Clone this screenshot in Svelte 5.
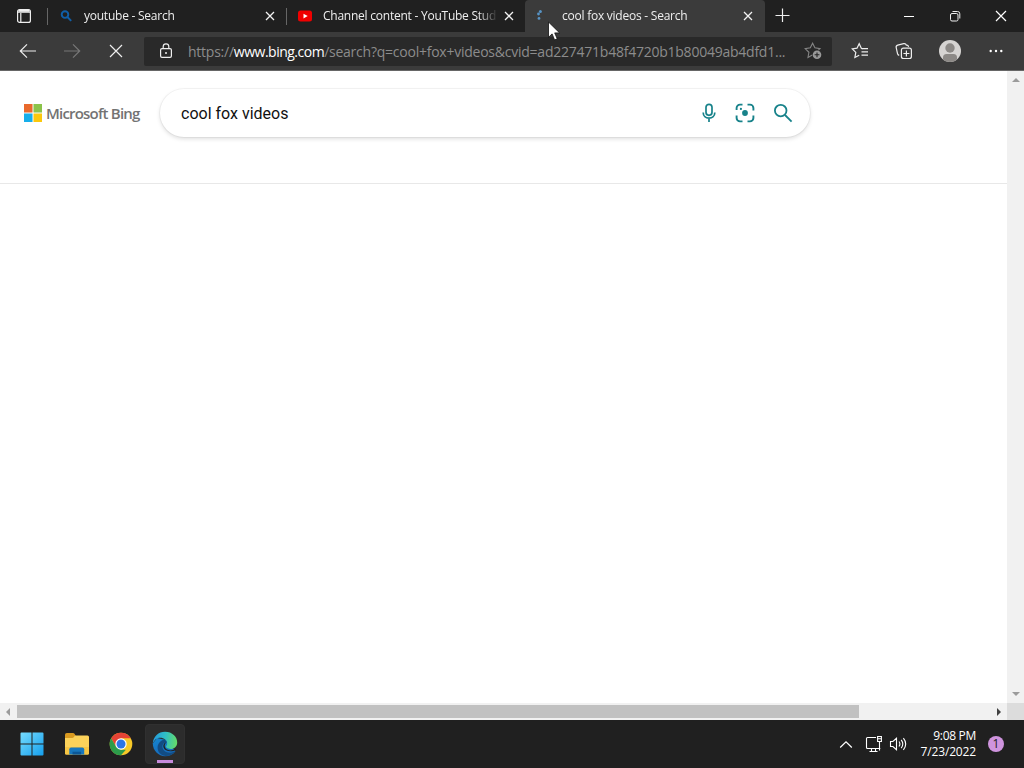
<script>
    const tabs = [
        { title: 'youtube - Search', icon: 'search', active: false },
        { title: 'Channel content - YouTube Stud', icon: 'youtube', active: false },
        { title: 'cool fox videos - Search', icon: 'loading', active: true }
    ];

    let query = 'cool fox videos';
</script>

<div class="desktop">
    <div class="tab-strip">
        <div class="tab-actions">
            <svg width="16" height="16" viewBox="0 0 16 16" fill="none" stroke="#eee" stroke-width="1.2">
                <rect x="1.6" y="1.6" width="12.8" height="12.8" rx="2" />
                <path d="M1.6 4.2h12.8M4.8 5v9.4" />
                <path d="M2.5 2.8h11" stroke-width="2" />
            </svg>
        </div>
        {#each tabs as tab}
            <div class="tab" class:active={tab.active}>
                <span class="favicon">
                    {#if tab.icon === 'search'}
                        <svg width="14" height="14" viewBox="0 0 14 14" fill="none" stroke="#105fa8" stroke-width="1.9">
                            <circle cx="6" cy="5.6" r="3.3" />
                            <path d="M8.4 8l3.8 3.9" />
                        </svg>
                    {:else if tab.icon === 'youtube'}
                        <svg width="14" height="14" viewBox="0 0 14 14">
                            <rect y="1.6" width="14" height="11" rx="2.5" fill="#f00000" />
                            <path d="M5.5 4.7v4.8l4.2-2.4z" fill="#fff" />
                        </svg>
                    {:else}
                        <svg width="14" height="14" viewBox="0 0 14 14" fill="#5793c4">
                            <circle cx="3.4" cy="2.4" r="1.5" />
                            <circle cx="1.5" cy="5" r="1.4" />
                            <circle cx="2" cy="9.4" r="1.4" />
                        </svg>
                    {/if}
                </span>
                <span class="title">{tab.title}</span>
                <svg class="close" width="10" height="10" viewBox="0 0 10 10" fill="none" stroke="#f2f2f2" stroke-width="1.3">
                    <path d="M1 1l8 8M9 1l-8 8" />
                </svg>
            </div>
        {/each}
        <svg class="new-tab" width="16" height="16" viewBox="0 0 16 16" stroke="#eee" stroke-width="1.2">
            <path d="M8.5 1.5v13.5M1.5 8.5h14" />
        </svg>
        <div class="window-controls">
            <span><svg width="12" height="12" viewBox="0 0 12 12" stroke="#fff"><path d="M1 6.5h10" /></svg></span>
            <span>
                <svg width="12" height="12" viewBox="0 0 12 12" fill="none" stroke="#eee">
                    <rect x="1.5" y="3.5" width="7.5" height="7.5" rx="1.5" />
                    <path d="M3.5 1.5h5a2.3 2.3 0 0 1 2.3 2.3v4.7" />
                </svg>
            </span>
            <span>
                <svg width="12" height="12" viewBox="0 0 12 12" stroke="#fff" stroke-width="1.2"><path d="M1 1l10 10M11 1L1 11" /></svg>
            </span>
        </div>
    </div>

    <div class="toolbar">
        <div class="nav">
            <span><svg width="18" height="16" viewBox="0 0 18 16" fill="none" stroke="#eee" stroke-width="1.2"><path d="M17 8H1.5M8 1.3L1.3 8 8 14.7" /></svg></span>
            <span><svg width="18" height="16" viewBox="0 0 18 16" fill="none" stroke="#777" stroke-width="1.2"><path d="M1 8h15.5M10 1.3L16.7 8 10 14.7" /></svg></span>
            <span><svg width="14" height="14" viewBox="0 0 14 14" fill="none" stroke="#eee" stroke-width="1.2"><path d="M1 1l12 12M13 1L1 13" /></svg></span>
        </div>
        <div class="address">
            <svg class="lock" width="14" height="16" viewBox="0 0 14 16" fill="none" stroke="#eee" stroke-width="1.2">
                <rect x="1.6" y="5.6" width="10.8" height="8.8" rx="1.4" />
                <path d="M4.2 5.5V3.6a2.8 2.8 0 0 1 5.6 0v1.9" />
                <circle cx="7" cy="10" r="1" fill="#eee" stroke="none" />
            </svg>
            <span class="url">https://<b>www.bing.com</b>/search?q=cool+fox+videos&amp;cvid=ad227471b48f4720b1b80049ab4dfd1...</span>
            <svg class="add-favorite" width="18" height="18" viewBox="0 0 18 18" fill="none" stroke="#858585" stroke-width="1.1">
                <path d="M8.3 13L4 15.4l.9-5.1L1.2 6.6l5.1-.8L8.6 1.2l2.3 4.6 5.1.8-1.6 1.5" />
                <circle cx="13" cy="12.8" r="4.3" fill="#999" stroke="none" />
                <path d="M13 10.4v4.8M10.6 12.8h4.8" stroke="#252525" />
            </svg>
        </div>
        <div class="tools">
            <span>
                <svg width="18" height="18" viewBox="0 0 18 18" fill="none" stroke="#eee" stroke-width="1.2">
                    <path d="M11.7 6.6l-1.4-.3L8.2 1.7 6 6.2l-4.7.7 3.5 3.5-.9 5.1 4.3-2.3" />
                    <path d="M10.5 6.6H17M10.5 9.9H17M10.5 13.2H17" />
                </svg>
            </span>
            <span>
                <svg width="18" height="18" viewBox="0 0 18 18" fill="none" stroke="#eee" stroke-width="1.2">
                    <rect x="6.4" y="6.2" width="10" height="10.3" rx="2" />
                    <path d="M11.4 8.5v6M8.4 11.5h6M4.2 13.4c-1-.3-1.5-1-1.7-1.8L1.2 5.7c-.3-1.4.4-2.3 1.5-2.6l6-1.4c1.4-.3 2.3.4 2.6 1.5 1.3-.2 2 .3 2.3 1.6" />
                </svg>
            </span>
            <span>
                <svg width="22" height="22" viewBox="0 0 22 22">
                    <circle cx="11" cy="11" r="11" fill="#d6d4d2" />
                    <circle cx="11" cy="8" r="4.7" fill="#8c8986" />
                    <path d="M4 19.4v-1.8q0-3.6 3.5-3.6h7q3.5 0 3.5 3.6v1.8a11 11 0 0 1-14 0z" fill="#8c8986" />
                </svg>
            </span>
            <span><svg width="14" height="4" viewBox="0 0 14 4" fill="#fff"><circle cx="1.7" cy="2" r="1.2" /><circle cx="7" cy="2" r="1.2" /><circle cx="12.3" cy="2" r="1.2" /></svg></span>
        </div>
    </div>

    <div class="viewport">
        <div class="page">
            <div class="header">
                <svg class="ms" width="18" height="18" viewBox="0 0 19 19">
                    <path fill="#e9692c" d="M0 0h9v9H0z" />
                    <path fill="#8bc34a" d="M10 0h9v9h-9z" />
                    <path fill="#17aeea" d="M0 10h9v9H0z" />
                    <path fill="#fbc80c" d="M10 10h9v9h-9z" />
                </svg>
                <span class="brand">Microsoft Bing</span>
                <div class="search-box">
                    <span class="query">{query}</span>
                    <svg width="14" height="20" viewBox="0 0 14 20" fill="none" stroke="#17828a" stroke-width="1.7">
                        <rect x="4" y="1.3" width="6" height="11" rx="3" />
                        <path d="M1.2 9.5c0 3.5 2.5 5.6 5.8 5.6s5.8-2.1 5.8-5.6M7 15.3V19" />
                    </svg>
                    <svg width="20" height="20" viewBox="0 0 20 20" fill="none" stroke="#17828a" stroke-width="1.9">
                        <path d="M1.6 7V5a3.4 3.4 0 0 1 3.4-3.4h2.5M12.5 1.6H15A3.4 3.4 0 0 1 18.4 5v2.5M18.4 12.5V15a3.4 3.4 0 0 1-3.4 3.4h-2.5M7.5 18.4H5A3.4 3.4 0 0 1 1.6 15v-2.5" />
                        <circle cx="10" cy="10" r="2.9" fill="#17828a" stroke="none" />
                        <circle cx="5.9" cy="5.9" r="1.1" fill="#17828a" stroke="none" />
                    </svg>
                    <svg width="20" height="20" viewBox="0 0 20 20" fill="none" stroke="#17828a" stroke-width="1.8">
                        <circle cx="7.7" cy="7.6" r="5.8" />
                        <path d="M12 12l6.6 6.6" />
                    </svg>
                </div>
            </div>
        </div>
        <div class="scroll-y">
            <svg width="8" height="4" viewBox="0 0 8 4"><path d="M0 4l4-4 4 4z" fill="#9b9b9b" /></svg>
            <svg width="8" height="4" viewBox="0 0 8 4"><path d="M0 0l4 4 4-4z" fill="#9b9b9b" /></svg>
        </div>
        <div class="scroll-x">
            <svg width="4" height="8" viewBox="0 0 4 8"><path d="M4 0L0 4l4 4z" fill="#9b9b9b" /></svg>
            <div class="track"><div class="thumb"></div></div>
            <svg width="4" height="8" viewBox="0 0 4 8"><path d="M0 0l4 4-4 4z" fill="#404040" /></svg>
        </div>
        <div class="corner"></div>
    </div>

    <div class="taskbar">
        <div class="apps">
            <span class="app">
                <svg width="24" height="24" viewBox="0 0 24 24">
                    <defs>
                        <linearGradient id="win" x1="0" y1="0" x2="1" y2="1">
                            <stop offset="0" stop-color="#76dcff" />
                            <stop offset="1" stop-color="#159fed" />
                        </linearGradient>
                    </defs>
                    <path fill="url(#win)" d="M1.5.5h10v11H.5v-10a1 1 0 0 1 1-1zM12.5.5h10a1 1 0 0 1 1 1v10h-11zM.5 12.5h11v11h-10a1 1 0 0 1-1-1zM12.5 12.5h11v10a1 1 0 0 1-1 1h-10z" />
                </svg>
            </span>
            <span class="app">
                <svg width="26" height="24" viewBox="0 0 26 24">
                    <path d="M1 9V2.8Q1 1 2.8 1h6q1.4 0 2 1.2L12 4.5 9 9z" fill="#d99a20" />
                    <path d="M1 6h7.2q1 0 1.7-1L11 3.6h12.5Q25 3.6 25 5.1v16.1q0 1.3-1.3 1.3H2.3Q1 22.5 1 21.2z" fill="#fbd25a" />
                    <path d="M1 15h24v6.2q0 1.3-1.3 1.3H2.3Q1 22.5 1 21.2z" fill="#f6c543" />
                    <path d="M5.3 22.5v-5.3q0-1.7 1.7-1.7h11.5q1.7 0 1.7 1.7v5.3z" fill="#1777bd" />
                    <path d="M8.5 22.5v-2.8h8.6v2.8z" fill="#0c5796" />
                </svg>
            </span>
            <span class="app">
                <svg width="24" height="24" viewBox="0 0 24 24">
                    <circle cx="12" cy="12" r="11.3" fill="#f8c928" />
                    <path d="M2.2 6.3A11.3 11.3 0 0 1 21.8 6.35H12l-4.9 8.5z" fill="#e54335" />
                    <path d="M2.2 6.3l4.9 8.5L12 17.7h4.9L12 23.3A11.3 11.3 0 0 1 2.2 6.3z" fill="#2c9c4b" />
                    <circle cx="12" cy="12" r="5.7" fill="#fff" />
                    <circle cx="12" cy="12" r="4.5" fill="#2d75e6" />
                </svg>
            </span>
            <span class="app current">
                <svg width="26" height="26" viewBox="0 0 26 26">
                    <defs>
                        <linearGradient id="wave" x1="0" y1=".4" x2="1" y2=".5">
                            <stop offset="0" stop-color="#239adf" />
                            <stop offset=".5" stop-color="#30bfc4" />
                            <stop offset="1" stop-color="#65dc68" />
                        </linearGradient>
                        <linearGradient id="body" x1="0" y1="0" x2=".5" y2="1">
                            <stop offset="0" stop-color="#1686cf" />
                            <stop offset="1" stop-color="#1668b9" />
                        </linearGradient>
                    </defs>
                    <path d="M.8 12.5C.8 19.5 6.5 25.2 13 25.2c4.3 0 8-1.8 10.4-5L14 9 5 7z" fill="url(#body)" />
                    <path d="M.8 12.5C1.2 5.5 6.6.8 13 .8c7.3 0 12.2 5 12.2 10.6 0 4.1-2.9 6.5-6.7 6.5-3 0-4.7-1.2-4.5-2.3.3-1 1.2-1.3 1.2-3.1 0-3.2-3.1-5.7-7.1-5.7-3.3 0-6 2.3-7.3 5.7z" fill="url(#wave)" />
                    <path d="M14.8 11.3c-2.6.2-4.4 1.7-4.4 4.3 0 3.8 3.6 6.3 7.8 6.1 2.4-.1 4.2-1.3 5.2-1.5-2 3-5.8 4.7-9.7 4.7-5.4-.3-8.3-4.4-8.1-8.6.2-4.1 3.3-7 6.5-7.5 1.2 0 2.4 1 2.7 2.5z" fill="#124c83" />
                    <path d="M14.9 11.2c-1.7 1-2.4 2.5-2.2 4.1.4 2.6 2.7 4.1 5.6 4.1 2 0 3.5-.6 5.1-1.6.7-.2.8.3.4.9-1.3.9-3.2 1.6-5.6 1.6-4 0-6.9-2.4-6.9-5.2 0-2 1.3-3.6 3.6-3.9z" fill="#202020" />
                </svg>
            </span>
        </div>
        <div class="tray">
            <svg class="chevron" width="14" height="9" viewBox="0 0 14 9" fill="none" stroke="#fff" stroke-width="1.2"><path d="M1.2 7.5L7 1.8l5.8 5.7" /></svg>
            <svg class="network" width="18" height="18" viewBox="0 0 18 18" fill="none" stroke="#fff" stroke-width="1.1">
                <path d="M11 2.5H2.5q-1 0-1 1v9q0 1 1 1h12.8M6.5 13.5v3M10.5 13.5v3M4.5 16.5h8M12.6 1.5h3.8v5h-3.8zM14.5 6.5v9M13 3.7h3" />
            </svg>
            <svg class="volume" width="18" height="16" viewBox="0 0 18 16" fill="none" stroke="#fff" stroke-width="1.1">
                <path d="M1.5 5.5h2.4l3.6-3.2v11.4l-3.6-3.2H1.5zM10 5.5q1.8 2.5 0 5M12.2 3.8q3.2 4.2 0 8.4M14.4 2.2q4.6 5.8 0 11.6" />
            </svg>
            <div class="clock">
                <span>9:08 PM</span>
                <span class="date">7/23/2022</span>
            </div>
            <span class="badge">1</span>
        </div>
    </div>

    <svg class="cursor" width="14" height="21" viewBox="0 0 14 21">
        <path d="M1.5 1v15.3l3.6-3.4 2.5 6 2.6-1.1-2.5-5.9h4.9z" fill="#fff" stroke="#111" stroke-width=".8" />
    </svg>
</div>

<style>
    :global(body) {
        background: #fff;
        overflow: hidden;
    }

    .desktop {
        position: relative;
        display: flex;
        flex-direction: column;
        width: 1024px;
        height: 768px;
        overflow: hidden;
        color: #fff;
        font-family: "Open Sans", "Noto Sans", sans-serif;
        font-size: 12px;
    }

    svg {
        display: block;
        flex: none;
    }

    .tab-strip {
        display: flex;
        height: 32px;
        background: #202020;
    }

    .tab-actions {
        display: flex;
        align-items: center;
        justify-content: center;
        width: 48px;
    }

    .tab {
        display: flex;
        align-items: center;
        box-sizing: border-box;
        width: 239px;
        padding: 0 11px 0 12px;
        background: linear-gradient(#666, #666) left 0 top 8px / 1px 17px no-repeat;
    }

    .tab-actions + .tab {
        margin-left: -1px;
    }

    .tab.active {
        background: #3b3b3b;
        border-radius: 4px 4px 0 0;
        width: 240px;
        padding-right: 12px;
    }

    .favicon {
        width: 25px;
        flex: none;
    }

    .title {
        flex: 1;
        min-width: 0;
        white-space: nowrap;
        letter-spacing: -0.24px;
        line-height: 20px;
        color: #eee;
        margin-right: 6px;
        -webkit-mask-image: linear-gradient(90deg, #000 calc(100% - 20px), transparent);
        mask-image: linear-gradient(90deg, #000 calc(100% - 20px), transparent);
    }

    .new-tab {
        margin: 7px 0 0 9px;
    }

    .window-controls {
        display: flex;
        margin-left: auto;
    }

    .window-controls span {
        display: flex;
        align-items: center;
        justify-content: center;
        width: 46px;
    }

    .toolbar {
        display: flex;
        align-items: center;
        box-sizing: border-box;
        height: 39px;
        background: #3b3b3b;
        border-bottom: 1px solid #666;
    }

    .nav {
        display: flex;
        width: 144px;
        padding-left: 6px;
        box-sizing: border-box;
    }

    .nav span,
    .tools span {
        display: flex;
        align-items: center;
        justify-content: center;
        width: 44px;
    }

    .address {
        display: flex;
        align-items: center;
        box-sizing: border-box;
        width: 688px;
        height: 29px;
        padding: 0 10px 0 15px;
        background: #292929;
        border-radius: 2px;
    }

    .url {
        flex: 1;
        margin-left: 15px;
        white-space: nowrap;
        font-size: 14px;
        color: #8c8c8c;
        letter-spacing: -0.24px;
    }

    .url b {
        color: #fff;
        font-weight: 500;
        letter-spacing: -0.5px;
    }

    .tools {
        display: flex;
        padding-left: 6px;
    }

    .tools span:nth-child(3) {
        width: 48px;
    }

    .viewport {
        display: grid;
        grid-template-columns: 1fr 17px;
        grid-template-rows: 1fr 17px;
        height: 649px;
        background: #fff;
    }

    .header {
        display: flex;
        align-items: flex-start;
        box-sizing: border-box;
        height: 113px;
        padding: 18px 0 0 24px;
        border-bottom: 1px solid #e8e8e8;
    }

    .ms {
        margin-top: 15px;
    }

    .brand {
        width: 114px;
        margin: 13px 0 0 4px;
        color: #737373;
        font-size: 15px;
        font-weight: 600;
        letter-spacing: -0.8px;
        line-height: 22px;
        white-space: nowrap;
    }

    .search-box {
        display: flex;
        align-items: center;
        gap: 18px;
        box-sizing: border-box;
        width: 650px;
        height: 48px;
        padding: 0 17px 0 21px;
        border-radius: 24px;
        background: #fff;
        box-shadow: 0 0 0 1px rgba(0, 0, 0, .04), 0 2px 4px rgba(0, 0, 0, .13);
    }

    .search-box svg:nth-of-type(1) {
        margin-right: 1px;
    }

    .query {
        flex: 1;
        color: #111;
        font-family: Roboto, sans-serif;
        font-size: 16px;
    }

    .scroll-y {
        display: flex;
        flex-direction: column;
        align-items: center;
        justify-content: space-between;
        padding: 7px 0;
        background: #f1f1f1;
    }

    .scroll-x {
        display: flex;
        align-items: center;
        padding: 0 6px;
        background: #f1f1f1;
    }

    .track {
        flex: 1;
        padding: 0 7px;
    }

    .thumb {
        width: 842px;
        height: 13px;
        background: #c1c1c1;
    }

    .corner {
        background: #dcdcdc;
    }

    .taskbar {
        display: flex;
        justify-content: space-between;
        height: 48px;
        background: #202020;
    }

    .apps {
        display: flex;
        align-items: center;
        gap: 4px;
        padding-left: 13px;
    }

    .app {
        display: flex;
        align-items: center;
        justify-content: center;
        box-sizing: border-box;
        width: 40px;
        height: 40px;
    }

    .app:first-child svg {
        margin-right: 2px;
    }

    .app.current {
        border-radius: 4px;
        border: 1px solid #303030;
        background: linear-gradient(#c78bdc, #c78bdc) center bottom / 16px 3px no-repeat, #2c2c2c;
    }

    .tray {
        display: flex;
        align-items: center;
        padding-right: 20px;
    }

    .network {
        margin-left: 12px;
    }

    .volume {
        margin-left: 6px;
    }

    .clock {
        display: flex;
        flex-direction: column;
        align-items: flex-end;
        width: 69px;
        line-height: 16px;
        font-size: 12px;
        letter-spacing: -0.3px;
    }

    .date {
        letter-spacing: -0.15px;
    }

    .badge {
        width: 16px;
        height: 16px;
        margin-left: 12px;
        border-radius: 50%;
        background: #cf94de;
        color: #222;
        font-size: 12px;
        line-height: 16px;
        text-align: center;
    }

    .cursor {
        position: absolute;
        left: 547px;
        top: 21px;
    }
</style>
